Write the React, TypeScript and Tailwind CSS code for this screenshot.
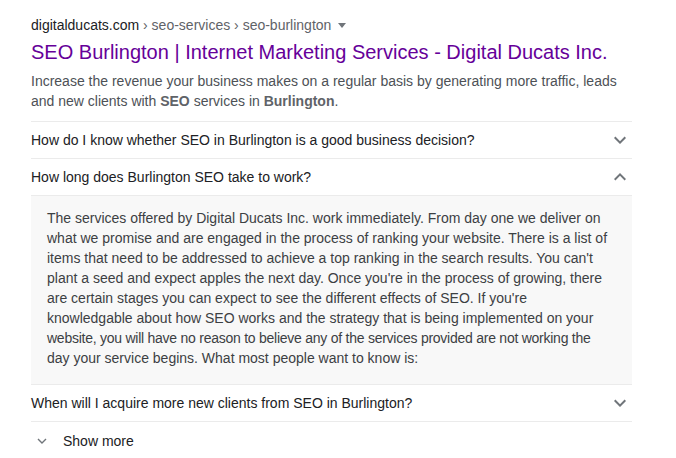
import React from "react";

const questions = [
  { q: "How do I know whether SEO in Burlington is a good business decision?", open: false },
  { q: "How long does Burlington SEO take to work?", open: true },
];

// line 7 runs a touch wider in Liberation Sans than in the original, so it gets a tighter track
const answerLines = [
  { text: "The services offered by Digital Ducats Inc. work immediately. From day one we deliver on" },
  { text: "what we promise and are engaged in the process of ranking your website. There is a list of" },
  { text: "items that need to be addressed to achieve a top ranking in the search results. You can't" },
  { text: "plant a seed and expect apples the next day. Once you're in the process of growing, there" },
  { text: "are certain stages you can expect to see the different effects of SEO. If you're" },
  { text: "knowledgable about how SEO works and the strategy that is being implemented on your" },
  {
    text: "website, you will have no reason to believe any of the services provided are not working the",
    tight: true,
  },
  { text: "day your service begins. What most people want to know is:" },
];

const Chevron = ({ up = false }: { up?: boolean }) => (
  <svg width="24" height="24" viewBox="0 0 24 24" className="fill-[#70757a]">
    {up ? (
      <path d="M7.41 15.41L12 10.83l4.59 4.58L18 14l-6-6-6 6z" />
    ) : (
      <path d="M16.59 8.59L12 13.17 7.41 8.59 6 10l6 6 6-6z" />
    )}
  </svg>
);

const Row = ({ text, up }: { text: string; up?: boolean }) => (
  <div className="flex items-center justify-between h-[36px] text-[14px] text-[#202124]">
    <span>{text}</span>
    <Chevron up={up} />
  </div>
);

export default function App() {
  return (
    <div className="w-[676px] h-[458px] bg-white font-['Liberation_Sans',Arial,sans-serif] overflow-hidden">
      <div className="pl-[31px] pt-[15px] w-[632px]">
        <div className="flex items-center text-[14px] leading-[20px]">
          <span className="text-[#202124]">digitalducats.com</span>
          <span className="text-[#5f6368]">&nbsp;› seo-services › seo-burlington</span>
          <span className="ml-[7px] w-0 h-0 border-l-[4px] border-r-[4px] border-t-[5px] border-l-transparent border-r-transparent border-t-[#70757a]" />
        </div>
        <div className="mt-[4px] text-[20px] leading-[26px] text-[#660099]">
          SEO Burlington | Internet Marketing Services - Digital Ducats Inc.
        </div>
        <div className="mt-[6px] text-[14px] leading-[20px] text-[#4d5156]">
          <div>
            Increase the revenue your business makes on a regular basis by generating more traffic, leads
          </div>
          <div>
            <span>and new clients with </span>
            <b className="text-[#5f6368]">SEO</b>
            <span> services in </span>
            <b className="text-[#5f6368]">Burlington</b>
            <span>.</span>
          </div>
        </div>

        <div className="mt-[10px] border-t border-[#ebebeb]">
          {questions.map((item) => (
            <div key={item.q} className="border-b border-[#ebebeb]">
              <Row text={item.q} up={item.open} />
            </div>
          ))}
          <div className="bg-[#f8f8f8] pl-[16px] pt-[12px] pb-[16px] text-[14px] leading-[20px] text-[#3c4043]">
            {answerLines.map((line) => (
              <div
                key={line.text}
                className={line.tight ? "whitespace-nowrap tracking-[-0.25px]" : "whitespace-nowrap"}
              >
                {line.text}
              </div>
            ))}
          </div>
          <div className="border-t border-b border-[#ebebeb]">
            <Row text="When will I acquire more new clients from SEO in Burlington?" />
          </div>
        </div>

        <div className="flex items-center h-[38px] text-[14px] text-[#202124]">
          <svg width="20" height="20" viewBox="0 0 20 20" className="ml-[1px] mr-[11px]">
            <polyline points="6,8 10,12 14,8" fill="none" stroke="#70757a" strokeWidth="1.4" />
          </svg>
          <span>Show more</span>
        </div>
      </div>
    </div>
  );
}
